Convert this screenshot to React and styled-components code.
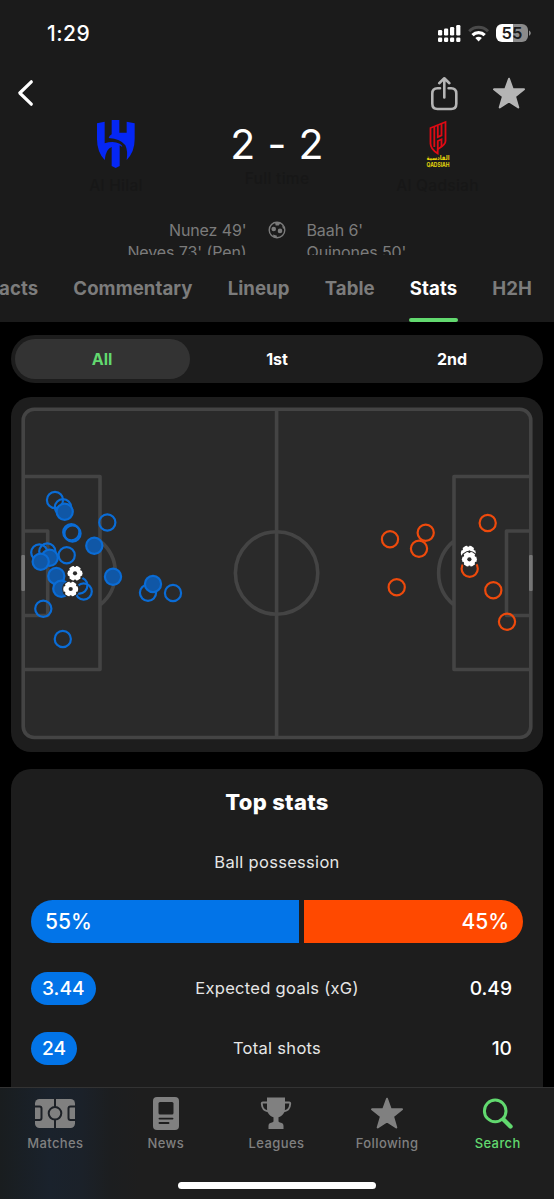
import React from "react";
import styled, { createGlobalStyle } from "styled-components";

const Global = createGlobalStyle`
  * { box-sizing: border-box; }
  body { margin: 0; background: #000; font-family: Inter, "Liberation Sans", sans-serif; color: #fff; }
  svg { display: block; flex: none; }
`;

const Screen = styled.div`
  width: 554px;
  height: 1199px;
  display: flex;
  flex-direction: column;
  overflow: hidden;
  background: #000;
`;

const Header = styled.header`
  height: 322px;
  flex: none;
  display: flex;
  flex-direction: column;
  background: #1b1b1b;
`;

const StatusBar = styled.div`
  height: 66px;
  flex: none;
  display: flex;
  align-items: center;
  justify-content: space-between;
  padding: 0 23px 0 47px;
`;

const Clock = styled.span`
  font-size: 21px;
  font-weight: 500;
  letter-spacing: 0.5px;
`;

const NavBar = styled.nav`
  height: 54px;
  flex: none;
  display: flex;
  align-items: center;
  justify-content: space-between;
  padding: 0 28.5px 0 16.5px;
`;

const NavActions = styled.div`
  display: flex;
  align-items: center;
  gap: 33.5px;
`;

const ScoreRow = styled.section`
  height: 100px;
  flex: none;
  display: grid;
  grid-template-columns: 1fr 92px 1fr;
`;

const Team = styled.div`
  display: flex;
  flex-direction: column;
  align-items: center;
  gap: ${(p) => (p.$away ? 6 : 8)}px;
  padding: ${(p) => (p.$away ? "0 2px 0 0" : "0 0 0 1px")};
`;

const Faded = styled.span`
  font-size: 15.5px;
  line-height: 20px;
  font-weight: 500;
  letter-spacing: 0.3px;
  color: #171717;
  white-space: nowrap;
`;

const ScoreBlock = styled.div`
  display: flex;
  flex-direction: column;
  align-items: center;
`;

const Score = styled.div`
  font-size: 41px;
  line-height: 49px;
  letter-spacing: 0.3px;
  white-space: nowrap;
`;

const Scorers = styled.section`
  height: 35px;
  flex: none;
  overflow: hidden;
  display: grid;
  grid-template-columns: 246.5px 60px 1fr;
`;

const ScorerList = styled.div`
  text-align: ${(p) => p.$align};
  font-size: 16px;
  line-height: 21.5px;
  letter-spacing: -0.1px;
  color: #7b7b7b;
`;

const BallCell = styled.div`
  display: flex;
  justify-content: center;
  padding: 1px 0 0 1px;
`;

const Tabs = styled.nav`
  flex: 1;
  display: flex;
  justify-content: flex-end;
  gap: 35.2px;
  padding-right: 22px;
`;

const Tab = styled.a`
  display: flex;
  flex-direction: column;
  justify-content: space-between;
  padding-top: 21px;
  font-size: 18.6px;
  line-height: 24px;
  font-weight: 700;
  letter-spacing: 0.06px;
  color: ${(p) => (p.$active ? "#fff" : "#7c7c7c")};
  &::after {
    content: "";
    height: 4px;
    margin: 0 -0.5px;
    border-radius: 2px;
    background: ${(p) => (p.$active ? "#62d96f" : "transparent")};
  }
`;

const Main = styled.main`
  flex: 1;
  min-height: 0;
  overflow: hidden;
  padding: 13px 11px 0;
`;

const Segmented = styled.div`
  height: 48px;
  display: flex;
  padding: 4px 3.5px;
  border-radius: 24px;
  background: #1d1d1d;
`;

const Segment = styled.button`
  flex: 1;
  border: 0;
  border-radius: 20px;
  padding: 0;
  font: 700 16px Inter, sans-serif;
  background: ${(p) => (p.$active ? "#333" : "transparent")};
  color: ${(p) => (p.$active ? "#62d96f" : "#fff")};
`;

const PitchCard = styled.section`
  height: 355px;
  margin-top: 14px;
  border-radius: 20px;
  background: #1d1d1d;
`;

const StatsCard = styled.section`
  height: 400px;
  margin-top: 17px;
  padding: 19px 20px 0;
  border-radius: 20px;
  background: #1d1d1d;
  display: flex;
  flex-direction: column;
`;

const StatsTitle = styled.h2`
  margin: 0;
  text-align: center;
  font-size: 22px;
  line-height: 28px;
  font-weight: 800;
  letter-spacing: 0.3px;
`;

const StatLabel = styled.span`
  text-align: center;
  font-size: 16.5px;
  line-height: 20px;
  letter-spacing: 0.3px;
  color: #e6e6e6;
  white-space: nowrap;
`;

const PossessionLabel = styled(StatLabel)`
  margin-top: 36px;
`;

const Possession = styled.div`
  height: 43px;
  margin-top: 28px;
  display: flex;
  justify-content: space-between;
  border-radius: 22px;
  overflow: hidden;
`;

const Share = styled.div`
  width: calc(${(p) => p.$share}% - 2.75px);
  display: flex;
  align-items: center;
  justify-content: ${(p) => (p.$away ? "flex-end" : "flex-start")};
  padding: 0 14px;
  font-size: 21px;
  font-weight: 550;
  background: ${(p) => (p.$away ? "#ff4900" : "#0274e8")};
`;

const StatList = styled.div`
  display: flex;
  flex-direction: column;
  gap: 27px;
  padding-top: 29px;
`;

const StatRow = styled.div`
  height: 33px;
  display: grid;
  grid-template-columns: 1fr auto 1fr;
  align-items: center;
  & > ${StatLabel} {
    padding-bottom: 1px;
  }
`;

const StatValue = styled.span`
  justify-self: ${(p) => (p.$away ? "end" : "start")};
  padding: 0 11px;
  border-radius: 17px;
  font-size: 19.2px;
  line-height: 33px;
  font-weight: 500;
  background: ${(p) => (p.$away ? "transparent" : "#0274e8")};
`;

const TabBar = styled.footer`
  height: 112px;
  flex: none;
  display: flex;
  flex-direction: column;
  align-items: center;
  border-top: 1px solid #333;
  background: linear-gradient(90deg, #191d1f 0, #1a222c 50px, #1b2129 82px, #1c1e20 110px, #1e1e1e 140px);
`;

const TabItems = styled.div`
  width: 100%;
  height: 94px;
  display: grid;
  grid-template-columns: repeat(5, 1fr);
  padding: 9px 1px 0 0;
`;

const TabItem = styled.a`
  display: flex;
  flex-direction: column;
  align-items: center;
  gap: 3px;
  font-size: 13px;
  line-height: 20px;
  font-weight: 500;
  letter-spacing: 0.4px;
  color: ${(p) => (p.$active ? "#62d96f" : "#808080")};
`;

const HomeIndicator = styled.div`
  width: 198px;
  height: 7px;
  border-radius: 4px;
  background: #fff;
`;

const StatusIcons = () => (
  <svg width="94" height="22" viewBox="437 22 94 22">
    <g fill="#fff">
      <rect x="438" y="30" width="4.2" height="5.5" rx="1.2" />
      <rect x="444" y="28.6" width="4.2" height="6.9" rx="1.2" />
      <rect x="450" y="27" width="4.2" height="8.5" rx="1.2" />
      <rect x="456.2" y="25" width="4.2" height="10.5" rx="1.2" />
      {[438, 444, 450, 456.2].map((x) => (
        <rect key={x} x={x} y="37.6" width="4.2" height="4.3" rx="1.2" />
      ))}
    </g>
    <g fill="none" strokeWidth="2.9">
      <path d="M469.2 31.2a13.3 13.3 0 0 1 18.8 0" stroke="#4a4a4a" />
      <path d="M472.500 35.200a8.600 8.600 0 0 1 12.200 0" stroke="#fff" strokeWidth="3.200" />
    </g>
    <path d="M478.6 41.400l-3.300-3.400a4.700 4.700 0 0 1 6.600 0z" fill="#fff" />
    <path d="M502 24h11v18h-11a6 6 0 0 1-6-6v-6a6 6 0 0 1 6-6z" fill="#fff" />
    <path d="M513 24h9a6 6 0 0 1 6 6v6a6 6 0 0 1-6 6h-9z" fill="#8b8b8b" />
    <path d="M529 30.4c2.4 1 2.4 4.400 0 5.400z" fill="#8b8b8b" />
    <text x="512" y="39" textAnchor="middle" fontFamily="Inter" fontSize="16.500" fontWeight="600" fill="#1b1b1b">55</text>
  </svg>
);

const BackIcon = () => (
  <svg width="18" height="28" viewBox="17 80 18 28">
    <path d="M31.300 82.800L19.800 94l11.500 11.200" fill="none" stroke="#fff" strokeWidth="3.200" strokeLinecap="round" strokeLinejoin="round" />
  </svg>
);

const ShareIcon = () => (
  <svg width="28" height="36" viewBox="430 75 28 36">
    <g fill="none" stroke="#b5b5b5" strokeWidth="2.600" strokeLinecap="round" strokeLinejoin="round">
      <path d="M440 88.200h-2.500c-3.400 0-5.200 1.800-5.200 5.200v10.400c0 3.400 1.800 5.200 5.200 5.200h13.600c3.400 0 5.200-1.800 5.200-5.200V93.400c0-3.400-1.800-5.200-5.200-5.200h-2.500" />
      <path d="M444.300 97.500V78.600M439.200 83.200l5.100-4.900 5.100 4.900" />
    </g>
  </svg>
);

const StarIcon = ({ fill }) => (
  <svg width="34" height="33" viewBox="0 0 34 33">
    <path
      d="M17 1.800l3.700 10.400 11.300.100-9 7.100 3.300 11.100L17 24.300l-9.300 6.200 3.300-11.100L2 12.300l11.300-.1z"
      fill={fill}
      stroke={fill}
      strokeWidth="2"
      strokeLinejoin="round"
    />
  </svg>
);

const HilalCrest = () => (
  <svg width="38" height="48" viewBox="112 60 114 144">
    <g fill="#0527f5">
      <path d="M112 70l23-5v65q26-9 45 1 8 4 8 10l-8-5v62l-12 6-12-6v-57q-17 5-21 39-23-24-23-62z" />
      <path d="M156 60h23v38h22V65l24 5v48q0 38-24 62 4-28-4-44-14-20-50-22 2-8 9-11z" />
    </g>
  </svg>
);

const QadsiahCrest = () => (
  <svg width="32" height="50" viewBox="422 119 32 50">
    <g fill="none" stroke="#df0a14" strokeWidth="1.800">
      <path d="M430.500 127l15-6v19c0 4-4 6-7.800 8.200v4.300c-4-2.500-7.200-6-7.200-10z" />
      <path d="M434.300 126v20M437.800 124.500v11.500l3.700-1.700V123M437.800 148.500V140l3.700-1.700v7.200" />
    </g>
    <g fill="#e6d80a" fontWeight="700" textAnchor="middle">
      <text x="438" y="159" fontFamily="DejaVu Sans" fontSize="6.500" textLength="23" lengthAdjust="spacingAndGlyphs">القادسية</text>
      <text x="438" y="165.900" fontFamily="Inter" fontSize="6.300" textLength="23" lengthAdjust="spacingAndGlyphs">QADSIAH</text>
    </g>
  </svg>
);

const GoalIcon = () => (
  <svg width="18" height="18" viewBox="0 0 18 18">
    <circle cx="9" cy="9" r="7.800" fill="none" stroke="#7b7b7b" strokeWidth="1.400" />
    <g fill="#7b7b7b">
      <circle cx="5.700" cy="8" r="2.300" />
      <circle cx="12" cy="9.900" r="2.300" />
      <path d="M7 1.500l5.500.4-1.800 2.500-3 .1zM14 4l2.500 3-1.500.7zM5 13.500l4 1.200-.5 2-3-1z" />
    </g>
  </svg>
);

const homeShots = [
  [39.3, 552.5], [47.3, 551.5], [55, 500], [63, 507.3], [64.7, 511.7, 1], [107.3, 522.5],
  [71.3, 532.3], [72.5, 533.5], [94.3, 545.7, 1], [66.7, 555.3], [49.7, 557.7, 1], [40.7, 561.7, 1],
  [56.3, 576, 1], [61.3, 588.7, 1], [79.3, 585.5], [83.7, 591.5], [113, 576.8, 1],
  [148, 592.7], [153, 584, 1], [173, 593], [43.3, 608.7], [62.8, 639],
];

const awayShots = [
  [390, 539.3], [425.7, 532.7], [419, 548.7], [487.7, 523], [396.7, 587.3],
  [469.7, 568.7], [493.3, 590.3], [507, 621.7],
];

const goals = [[75, 573.3], [70.7, 589], [468.3, 553], [469.4, 559.3]];

const Shot = ({ x, y, color, fill }) => (
  <circle cx={x} cy={y} r="8.100" fill={fill || "none"} stroke={color} strokeWidth="2.200" />
);

const Ball = ({ x, y }) => (
  <g transform={`translate(${x} ${y})`}>
    <circle r="8.600" fill="#2a2a2a" />
    <circle r="7.500" fill="#fff" />
    <g fill="#2a2a2a">
      <circle r="2.100" />
      {[0, 60, 120, 180, 240, 300].map((a) => (
        <circle key={a} r="1.200" cx="0" cy="-7.500" transform={`rotate(${a})`} />
      ))}
    </g>
  </g>
);

const ShotMap = () => (
  <svg width="532" height="355" viewBox="11 397 532 355">
    <rect x="23" y="409" width="508" height="328.500" rx="11" fill="#2a2a2a" />
    <g fill="none" stroke="#444" strokeWidth="3.600" strokeLinejoin="round">
      <rect x="23.200" y="409.200" width="507.600" height="328.300" rx="11" />
      <path d="M276.600 409v328.500" />
      <circle cx="276.600" cy="573" r="41.200" />
      <path d="M23 476.500h77v193H23M23 531h24.700v84.500H23M100 541a41 41 0 0 1 0 64" />
      <path d="M531 476.500h-77v193h77M531 531h-24.500v84.500H531M454 541a41 41 0 0 0 0 64" />
    </g>
    <rect x="21.300" y="555" width="3.700" height="36" rx="1" fill="#757575" />
    <rect x="529" y="555" width="3.700" height="36" rx="1" fill="#757575" />
    {homeShots.map(([x, y, on], i) => (
      <Shot key={i} x={x} y={y} color="#0a6cd6" fill={on && "#1057a6"} />
    ))}
    {awayShots.map(([x, y], i) => (
      <Shot key={i} x={x} y={y} color="#ee4a0c" />
    ))}
    {goals.map(([x, y], i) => (
      <Ball key={i} x={x} y={y} />
    ))}
  </svg>
);

const MatchesIcon = () => (
  <svg width="42" height="33" viewBox="34 1097 42 33">
    <rect x="35" y="1099" width="40" height="29" rx="4.500" fill="#808080" />
    <g fill="none" stroke="#1c2026" strokeWidth="2">
      <circle cx="55" cy="1113.300" r="6.300" />
      <path d="M55 1098v9M55 1119.600v9M34 1106.500h5.500a2 2 0 0 1 2 2v9.500a2 2 0 0 1-2 2H34M76 1106.500h-5.500a2 2 0 0 0-2 2v9.500a2 2 0 0 0 2 2H76" />
    </g>
  </svg>
);

const NewsIcon = () => (
  <svg width="26" height="33" viewBox="0 0 26 33">
    <rect width="26" height="33" rx="4" fill="#808080" />
    <rect x="5.500" y="5" width="15" height="12.500" rx="1.500" fill="#1e1e1e" />
    <path d="M6.500 21.600h13M6.500 26h9" stroke="#1e1e1e" strokeWidth="1.900" strokeLinecap="round" />
  </svg>
);

const TrophyIcon = () => (
  <svg width="32" height="33" viewBox="0 0 32 33">
    <path d="M7 .5h18v10.500c0 5-2.500 8-6.500 9.300V24c0 1 .8 1.300 2.500 1.700 1.700.4 2.500 1.500 2.500 3.200V32h-15v-3.100c0-1.700.8-2.800 2.500-3.200 1.700-.4 2.500-.7 2.500-1.700v-3.700C9.500 19 7 16 7 11z" fill="#808080" />
    <path d="M8 5.500H3c-1 0-1.300.6-1.200 1.500.3 4 2.200 6.700 6.200 7.200M24 5.500h5c1 0 1.300.6 1.200 1.500-.3 4-2.200 6.700-6.200 7.200" fill="none" stroke="#808080" strokeWidth="1.900" />
  </svg>
);

const SearchIcon = () => (
  <svg width="32" height="33" viewBox="482 1097 32 33">
    <circle cx="495.200" cy="1110.900" r="10.800" fill="none" stroke="#62d96f" strokeWidth="3" />
    <path d="M503.500 1119.500l7 7" stroke="#62d96f" strokeWidth="4.400" strokeLinecap="round" />
  </svg>
);

const tabs = ["Facts", "Commentary", "Lineup", "Table", "Stats", "H2H"];

const stats = [
  { home: "3.44", label: "Expected goals (xG)", away: "0.49" },
  { home: "24", label: "Total shots", away: "10" },
];

const destinations = [
  { label: "Matches", icon: <MatchesIcon /> },
  { label: "News", icon: <NewsIcon /> },
  { label: "Leagues", icon: <TrophyIcon /> },
  { label: "Following", icon: <StarIcon fill="#808080" /> },
  { label: "Search", icon: <SearchIcon />, active: true },
];

export default function App() {
  return (
    <Screen>
      <Global />
      <Header>
        <StatusBar>
          <Clock>1:29</Clock>
          <StatusIcons />
        </StatusBar>
        <NavBar>
          <BackIcon />
          <NavActions>
            <ShareIcon />
            <StarIcon fill="#b5b5b5" />
          </NavActions>
        </NavBar>
        <ScoreRow>
          <Team>
            <HilalCrest />
            <Faded>Al Hilal</Faded>
          </Team>
          <ScoreBlock>
            <Score>2 - 2</Score>
            <Faded>Full time</Faded>
          </ScoreBlock>
          <Team $away>
            <QadsiahCrest />
            <Faded>Al Qadsiah</Faded>
          </Team>
        </ScoreRow>
        <Scorers>
          <ScorerList $align="right">
            <div>Nunez 49'</div>
            <div>Neves 73' (Pen)</div>
          </ScorerList>
          <BallCell>
            <GoalIcon />
          </BallCell>
          <ScorerList $align="left">
            <div>Baah 6'</div>
            <div>Quinones 50'</div>
          </ScorerList>
        </Scorers>
        <Tabs>
          {tabs.map((t) => (
            <Tab key={t} $active={t === "Stats"}>{t}</Tab>
          ))}
        </Tabs>
      </Header>
      <Main>
        <Segmented>
          <Segment $active>All</Segment>
          <Segment>1st</Segment>
          <Segment>2nd</Segment>
        </Segmented>
        <PitchCard>
          <ShotMap />
        </PitchCard>
        <StatsCard>
          <StatsTitle>Top stats</StatsTitle>
          <PossessionLabel>Ball possession</PossessionLabel>
          <Possession>
            <Share $share={55}>55%</Share>
            <Share $share={45} $away>45%</Share>
          </Possession>
          <StatList>
            {stats.map((s) => (
              <StatRow key={s.label}>
                <StatValue>{s.home}</StatValue>
                <StatLabel>{s.label}</StatLabel>
                <StatValue $away>{s.away}</StatValue>
              </StatRow>
            ))}
          </StatList>
        </StatsCard>
      </Main>
      <TabBar>
        <TabItems>
          {destinations.map((d) => (
            <TabItem key={d.label} $active={d.active}>
              {d.icon}
              {d.label}
            </TabItem>
          ))}
        </TabItems>
        <HomeIndicator />
      </TabBar>
    </Screen>
  );
}
